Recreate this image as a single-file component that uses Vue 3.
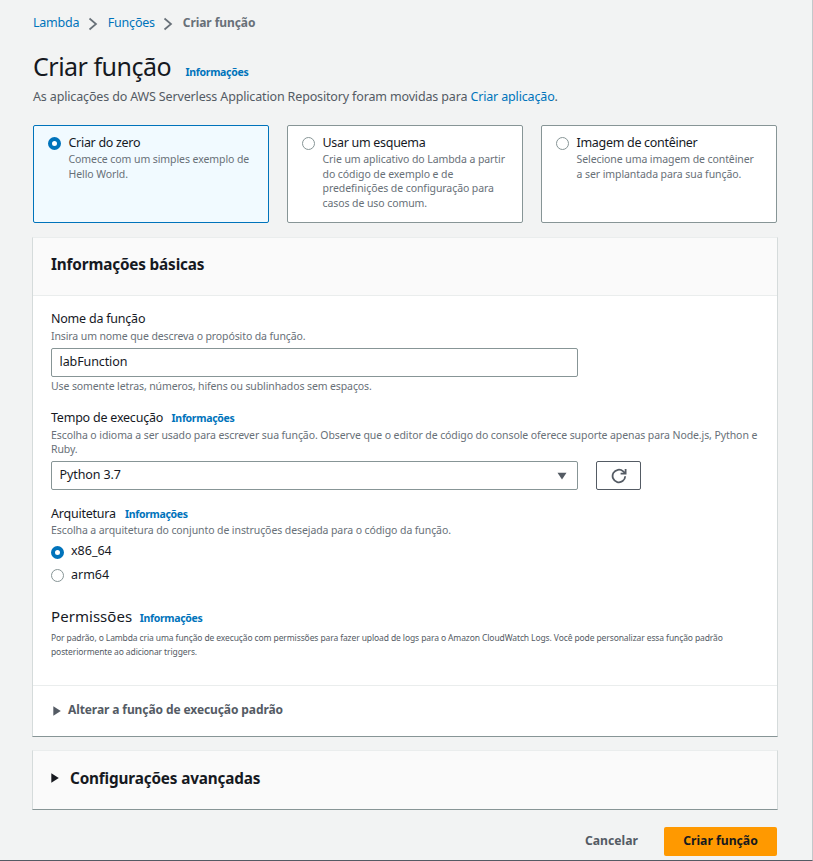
<script setup>
import { ref } from 'vue'

const options = [
  { id: 'scratch', title: 'Criar do zero', lines: ['Comece com um simples exemplo de', 'Hello World.'] },
  { id: 'blueprint', title: 'Usar um esquema', lines: ['Crie um aplicativo do Lambda a partir', 'do código de exemplo e de', 'predefinições de configuração para', 'casos de uso comum.'] },
  { id: 'container', title: 'Imagem de contêiner', lines: ['Selecione uma imagem de contêiner', 'a ser implantada para sua função.'] },
]
const architectures = ['x86_64', 'arm64']
const selected = ref('scratch')
const arch = ref('x86_64')
const name = ref('labFunction')
</script>

<template>
  <main class="page">
    <nav class="crumbs">
      <a class="link">Lambda</a>
      <svg class="chevron" viewBox="0 0 10 14"><path d="M1.5 1.5 8 7l-6.5 5.5" /></svg>
      <a class="link">Funções</a>
      <svg class="chevron" viewBox="0 0 10 14"><path d="M1.5 1.5 8 7l-6.5 5.5" /></svg>
      <span class="current">Criar função</span>
    </nav>

    <header class="heading">
      <h1>Criar função</h1>
      <a class="info">Informações</a>
    </header>
    <p class="intro">As aplicações do AWS Serverless Application Repository foram movidas para <a class="link">Criar aplicação</a>.</p>

    <section class="cards">
      <div v-for="o in options" :key="o.id" class="card" :class="{ active: selected === o.id }" @click="selected = o.id">
        <span class="radio" :class="{ on: selected === o.id }"></span>
        <div class="card-text">
          <div class="card-title">{{ o.title }}</div>
          <div v-for="l in o.lines" :key="l" class="card-line">{{ l }}</div>
        </div>
      </div>
    </section>

    <section class="panel">
      <div class="panel-head"><h2>Informações básicas</h2></div>
      <div class="panel-body">
        <div class="field name">
          <div class="label">Nome da função</div>
          <div class="hint">Insira um nome que descreva o propósito da função.</div>
          <input v-model="name" class="control" type="text" />
          <div class="hint below">Use somente letras, números, hifens ou sublinhados sem espaços.</div>
        </div>

        <div class="field runtime">
          <div class="label">Tempo de execução <a class="info">Informações</a></div>
          <div class="hint">Escolha o idioma a ser usado para escrever sua função. Observe que o editor de código do console oferece suporte apenas para Node.js, Python e<br />Ruby.</div>
          <div class="row">
            <div class="control select">
              <span>Python 3.7</span>
              <svg class="caret" viewBox="0 0 10 8"><path d="M.5.8h9L5 7.6z" /></svg>
            </div>
            <button class="refresh">
              <svg viewBox="0 0 16 16"><path d="M14.2 8.2A6.3 6.3 0 1 1 12.2 3.4L14 5.2" /><path d="M14.6.9v4.7H9.6" /></svg>
            </button>
          </div>
        </div>

        <div class="field arch">
          <div class="label">Arquitetura <a class="info">Informações</a></div>
          <div class="hint">Escolha a arquitetura do conjunto de instruções desejada para o código da função.</div>
          <div v-for="a in architectures" :key="a" class="choice" @click="arch = a">
            <span class="radio" :class="{ on: arch === a }"></span><span class="choice-text">{{ a }}</span>
          </div>
        </div>

        <div class="permissions">
          <div class="perm-title">Permissões <a class="info">Informações</a></div>
          <p class="perm-text">Por padrão, o Lambda cria uma função de execução com permissões para fazer upload de logs para o Amazon CloudWatch Logs. Você pode personalizar essa função padrão<br />posteriormente ao adicionar triggers.</p>
        </div>
      </div>
      <div class="expand">
        <svg class="tri" viewBox="0 0 8 10"><path d="M.3.3v9.4L7.8 5z" /></svg>
        <span>Alterar a função de execução padrão</span>
      </div>
    </section>

    <section class="panel advanced">
      <svg class="tri" viewBox="0 0 8 10"><path d="M.3.3v9.4L7.8 5z" /></svg>
      <h2>Configurações avançadas</h2>
    </section>

    <footer class="actions">
      <button class="cancel">Cancelar</button>
      <button class="create">Criar função</button>
    </footer>
  </main>
</template>

<style>
body { background: #f2f3f3; }
</style>

<style scoped>
.page {
  box-sizing: border-box;
  width: 813px;
  height: 861px;
  padding: 14px 35px 0 33px;
  overflow: hidden;
  border-right: 1px solid #c3c8ca;
  border-bottom: 1px solid #545b64;
  background: #f2f3f3;
  color: #16191f;
  font-family: "Noto Sans", sans-serif;
  font-size: 12.5px;
  letter-spacing: -0.22px;
  white-space: nowrap;
}
h1, h2, p { margin: 0; }
a { cursor: pointer; }
button { font-family: inherit; cursor: pointer; }
.link { color: #0073bb; }
.crumbs { display: flex; align-items: center; height: 18px; line-height: 18px; }
.chevron { width: 10px; height: 14px; margin: 2px 9.5px 0 9px; fill: none; stroke: #687078; stroke-width: 1.7; }
.chevron + .link { margin-right: -0.5px; }
.current { color: #687078; font-weight: 700; font-size: 12px; letter-spacing: -0.08px; }
.heading { display: flex; align-items: baseline; height: 36px; margin-top: 16px; line-height: 36px; }
h1 { font-size: 25px; font-weight: 400; letter-spacing: -0.5px; }
.info { color: #0073bb; font-size: 10.5px; font-weight: 700; letter-spacing: -0.32px; }
.heading .info { margin-left: 14.5px; }
.intro { height: 18px; margin-top: 4px; line-height: 18px; color: #545b64; letter-spacing: -0.15px; }

.cards { display: grid; grid-template-columns: repeat(3, 236px); gap: 18px; margin-top: 19px; }
.card {
  display: flex;
  box-sizing: border-box;
  height: 98px;
  padding: 8px 0 0 14px;
  border: 1px solid #879596;
  border-radius: 2px;
  background: #fff;
}
.card.active { border-color: #0073bb; background: #f1faff; }
.radio {
  flex: none;
  box-sizing: border-box;
  width: 13px;
  height: 13px;
  border: 1px solid #879596;
  border-radius: 50%;
  background: #fff;
}
.radio.on { border: 4px solid #0073bb; }
.card .radio { margin-top: 3px; }
.card-text { margin-left: 7.5px; }
.card-title { height: 18px; line-height: 18px; letter-spacing: -0.3px; }
.card-line { height: 14.5px; line-height: 14.5px; color: #687078; font-size: 10.5px; letter-spacing: -0.08px; }

.panel {
  box-sizing: border-box;
  width: 746px;
  height: 500px;
  margin: 14px 0 0 -1px;
  border: 1px solid #d5dbdb;
  border-top-color: #eaeded;
  border-bottom-color: #879596;
  background: #fff;
}
.panel-head { box-sizing: border-box; height: 58px; padding: 15px 18px 0; border-bottom: 1px solid #eaeded; background: #fafafa; }
h2 { font-size: 15.3px; line-height: 22px; font-weight: 700; letter-spacing: -0.16px; }
.panel-body { box-sizing: border-box; height: 390px; padding: 14px 18px 0; border-bottom: 1px solid #eaeded; }
.label { height: 18px; line-height: 18px; }
.label .info { margin-left: 5.5px; }
.hint { line-height: 14px; color: #687078; font-size: 10.5px; letter-spacing: -0.09px; }
.name .hint { height: 16px; line-height: 16px; letter-spacing: -0.11px; }
.control {
  display: block;
  box-sizing: border-box;
  width: 527px;
  height: 29px;
  margin: 0;
  padding: 0 7.5px 2px;
  border: 1px solid #879596;
  border-radius: 2px;
  outline: none;
  background: #fff;
  color: #16191f;
  font: inherit;
  letter-spacing: -0.1px;
}
.name .control { margin-top: 4px; }
.name .below { margin-top: 1px; }
.runtime { margin-top: 15px; }
.runtime .hint { padding-top: 1px; height: 32px; box-sizing: border-box; line-height: 14.4px; }
.row { display: flex; gap: 18px; margin-top: 2px; }
.select { display: flex; align-items: center; justify-content: space-between; padding-right: 10px; }
.caret { width: 10px; height: 8px; margin-top: 3px; fill: #545b64; }
.refresh {
  display: flex;
  align-items: center;
  justify-content: center;
  box-sizing: border-box;
  width: 45px;
  height: 29px;
  padding: 0;
  border: 1px solid #545b64;
  border-radius: 2px;
  background: #fff;
}
.refresh svg { width: 16px; height: 16px; fill: none; stroke: #545b64; stroke-width: 1.8; }
.arch { margin-top: 15px; }
.arch .hint { height: 17px; line-height: 15px; }
.arch .info { margin-left: 6px; }
.choice { display: flex; align-items: center; height: 23.5px; }
.choice .radio { margin-top: 1px; }
.choice-text { margin: -2px 0 0 7px; letter-spacing: 0; }
.permissions { margin-top: 18px; }
.perm-title { height: 22px; line-height: 22px; font-size: 15px; letter-spacing: 0.05px; }
.perm-title .info { margin-left: 3.5px; }
.perm-text { margin-top: 4px; line-height: 14px; color: #545b64; font-size: 8.5px; letter-spacing: -0.11px; }
.expand { display: flex; align-items: center; height: 50px; padding-left: 19.5px; color: #545b64; font-size: 12px; font-weight: 700; letter-spacing: -0.1px; }
.expand span { margin: -3px 0 0 7.5px; }
.tri { width: 8px; height: 10px; fill: currentColor; }
.advanced { display: flex; align-items: center; height: 60px; margin-top: 13px; padding-left: 18px; background: #fafafa; }
.advanced h2 { margin: -5px 0 0 11px; }
.advanced .tri { margin-top: -4px; }
.actions { display: flex; justify-content: flex-end; margin-top: 17px; }
.actions button { height: 29px; padding: 0 0 2px; border: 0; border-radius: 2px; font-size: 12.2px; font-weight: 700; letter-spacing: 0; }
.cancel { width: 105px; background: transparent; color: #545b64; }
.create { width: 113px; background: #ff9900; color: #16191f; }
</style>
